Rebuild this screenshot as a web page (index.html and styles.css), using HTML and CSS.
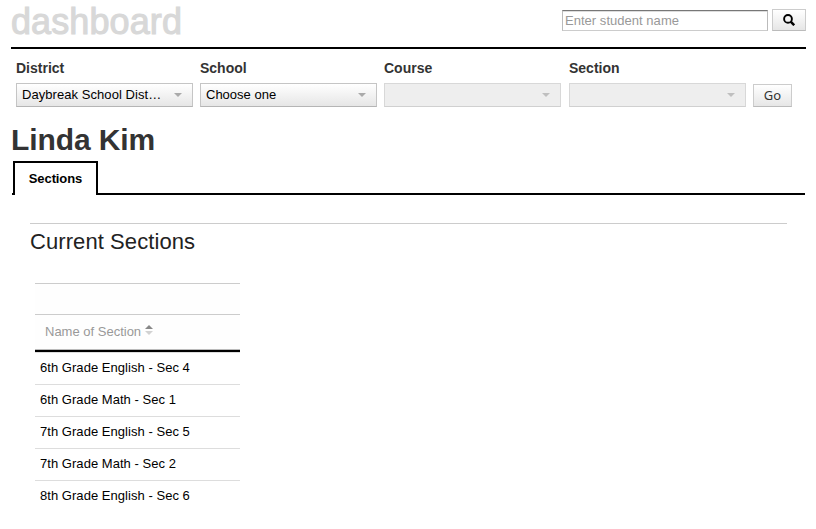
FILE: index.html
```html
<!DOCTYPE html>
<html lang="en">
<head>
<meta charset="utf-8">
<title>dashboard</title>
<link rel="stylesheet" href="styles.css">
</head>
<body>
<header class="header">
  <div class="brand">dashboard</div>
  <form class="search">
    <input class="search-input" type="text" placeholder="Enter student name">
    <button class="button search-button" type="button" aria-label="Search">
      <svg width="12" height="12" viewBox="0 0 12 12" fill="none" stroke="#000"><circle cx="5" cy="4.9" r="3.9" stroke-width="1.9"/><path d="M7.7 7.7L11.2 11.2" stroke-width="2.5"/></svg>
    </button>
  </form>
</header>
<section class="filters">
  <div class="field"><div class="label">District</div><div class="select"><span class="long">Daybreak School Dist…</span><i class="arrow"></i></div></div>
  <div class="field"><div class="label">School</div><div class="select"><span>Choose one</span><i class="arrow"></i></div></div>
  <div class="field"><div class="label">Course</div><div class="select disabled"><span></span><i class="arrow"></i></div></div>
  <div class="field section-field"><div class="label">Section</div><div class="select disabled"><span></span><i class="arrow"></i></div></div>
  <button class="button go" type="button">Go</button>
</section>
<h1 class="name">Linda Kim</h1>
<nav class="tabs"><div class="tab">Sections</div></nav>
<main class="panel">
  <h2 class="title">Current Sections</h2>
  <div class="grid">
    <div class="grid-top"></div>
    <div class="grid-head"><span>Name of Section</span><svg width="8" height="10" viewBox="0 0 8 10"><path d="M0 4L4 0L8 4Z" fill="#888"/><path d="M0 6L4 10L8 6Z" fill="#d2d2d2"/></svg></div>
    <div class="row">6th Grade English - Sec 4</div>
    <div class="row">6th Grade Math - Sec 1</div>
    <div class="row">7th Grade English - Sec 5</div>
    <div class="row">7th Grade Math - Sec 2</div>
    <div class="row">8th Grade English - Sec 6</div>
  </div>
</main>
</body>
</html>
```
FILE: styles.css
```css
* { box-sizing: border-box; }
body {
  margin: 0;
  padding: 0 10px 0 11px;
  height: 529px;
  overflow: hidden;
  background: #fff;
  color: #000;
  font: 13px/16px "Liberation Sans", Arial, sans-serif;
}
.header {
  display: flex;
  justify-content: space-between;
  height: 49px;
  border-bottom: 2px solid #000;
}
.brand {
  padding-top: 1px;
  font-size: 36px;
  line-height: 41px;
  letter-spacing: 0.1px;
  color: #d8d8d8;
  -webkit-text-stroke: 1.1px #d8d8d8;
}
.search { display: flex; gap: 4px; padding-top: 9px; }
.search-input {
  width: 206px;
  height: 21px;
  margin-top: 1px;
  padding: 0 2px;
  border: 1px solid #bbb;
  border-top: 1px solid #777;
  border-bottom-color: #ccc;
  box-shadow: inset 0 1px 0 #ddd;
  font: inherit;
}
.search-input::placeholder { color: #999; opacity: 1; letter-spacing: 0.03px; }
.button {
  display: flex;
  align-items: center;
  justify-content: center;
  padding: 0;
  border: 1px solid #ccc;
  border-bottom-color: #bbb;
  background: linear-gradient(#fff, #e6e6e6);
}
.search-button { width: 34px; height: 22px; }
.filters { display: flex; gap: 7px; height: 72px; padding: 10px 0 0 5px; }
.field { width: 177px; }
.section-field { margin-left: 1px; }
.label {
  height: 24px;
  line-height: 19px;
  font-size: 14px;
  font-weight: bold;
  color: #333;
}
.select {
  display: flex;
  align-items: center;
  justify-content: space-between;
  height: 24px;
  padding: 0 10px 0 5px;
  border: 1px solid #c5c5c5;
  border-bottom-color: #b5b5b5;
  background: linear-gradient(#fff, #e6e6e6);
}
.long { letter-spacing: 0.06px; }
.disabled { border-color: #d8d8d8; border-bottom-color: #d0d0d0; background: #eee; }
.arrow {
  border: 4px solid transparent;
  border-top-color: #aaa;
  border-bottom: 0;
}
.disabled .arrow { border-top-color: #bfbfbf; }
.go {
  width: 39px;
  height: 23px;
  margin-top: 25px;
  font: 13px/17px "Noto Sans", sans-serif;
  color: #333;
}
.name {
  height: 40px;
  margin: 0;
  font-size: 30px;
  line-height: 37px;
  letter-spacing: -0.1px;
  color: #333;
}
.tabs {
  height: 34px;
  width: 793px;
  margin-left: 1px;
  padding-left: 1px;
  border-bottom: 2px solid #000;
}
.tab {
  width: 85px;
  height: 34px;
  border: 2px solid #000;
  border-bottom: 0;
  background: #fff;
  line-height: 31px;
  font-weight: bold;
  text-align: center;
  letter-spacing: -0.1px;
}
.panel { padding: 28px 19px 0 19px; }
.title {
  height: 60px;
  margin: 0;
  padding-top: 5px;
  border-top: 1px solid #ccc;
  font-size: 22px;
  font-weight: normal;
  line-height: 25px;
  letter-spacing: 0.08px;
  color: #222;
}
.grid { width: 205px; margin-left: 5px; }
.grid-top { height: 31px; border-top: 1px solid #ccc; background: #fefefe; }
.grid-head {
  display: flex;
  gap: 4px;
  height: 38px;
  margin-bottom: 1px;
  padding: 9px 0 0 10px;
  border-top: 1px solid #ccc;
  border-bottom: 2px solid #000;
  background: #fefefe;
  box-shadow: inset 0 -1px 0 #bbb, 0 1px 0 #ddd;
  color: #999;
}
.grid-head svg { margin-top: 1px; }
.row {
  height: 32px;
  padding: 7px 5px;
  border-bottom: 1px solid #ddd;
  letter-spacing: 0.04px;
}
.row:last-child { border-bottom: 0; }
```
